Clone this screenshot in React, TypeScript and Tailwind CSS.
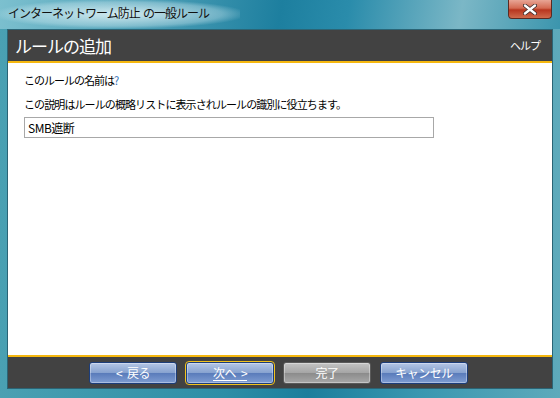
const JP = "font-['Noto_Sans_CJK_JP','Noto_Sans',sans-serif]"

function VistaButton({ children, tone = 'blue', focused = false }: { children: React.ReactNode; tone?: 'blue' | 'gray'; focused?: boolean }) {
  const face =
    tone === 'gray'
      ? 'border-[#5a5a5a] bg-[linear-gradient(#c4c4c4,#a6a6a6_48%,#8c8c8c_52%,#a8a8a8)]'
      : 'border-[#1c3d7a] bg-[linear-gradient(#b4c6e6,#88a3d0_48%,#5a7cbb_52%,#7f9dd2)]'
  return (
    <div
      className={`flex h-[22px] w-[88px] items-center justify-center rounded-[3px] border ${face} ${
        focused ? 'outline outline-1 outline-[#f2c21b]' : ''
      } shadow-[inset_0_0_0_1px_rgba(255,255,255,0.35)]`}
    >
      <span className={`${JP} flex items-center gap-[5px] text-[12px] leading-none tracking-[-0.5px] text-white`}>
        {children}
      </span>
    </div>
  )
}

export default function App() {
  return (
    <div className="flex h-[398px] w-[560px] flex-col overflow-hidden bg-[linear-gradient(90deg,#4aa0b2,#2d8ea6_40%,#1b7e9c_55%,#3a97b0_75%,#5eaabb)]">
      {/* title bar */}
      <div className="relative flex h-[29px] shrink-0 items-start bg-[linear-gradient(100deg,#7cc0cf,#5aa8bd_20%,#1d7f9f_50%,#2a8cab_62%,#7bb7c6_82%,#3b95ad)]">
        <div className="absolute left-0 top-0 h-[28px] w-[240px] bg-[radial-gradient(ellipse_at_center,rgba(230,245,248,0.85),rgba(200,230,238,0.4)_60%,transparent_75%)]" />
        <span className={`${JP} relative ml-[8px] mt-[5px] whitespace-pre text-[12px] leading-[16px] tracking-[-1px] text-[#111]`}>
          {'インターネットワーム防止  の一般ルール'}
        </span>
        <div className="absolute left-[508px] top-0 flex h-[19px] w-[44px] items-center justify-center rounded-b-[4px] border border-t-0 border-[#5b2a22] bg-[linear-gradient(#e8a595,#d46a52_45%,#b8361f_55%,#cf6a4c)]">
          <svg width="14" height="11" viewBox="0 0 14 11">
            <path d="M2 1.5 L12 9.5 M12 1.5 L2 9.5" stroke="#3a2a2a" strokeWidth="4" strokeLinecap="round" />
            <path d="M2 1.5 L12 9.5 M12 1.5 L2 9.5" stroke="#fff" strokeWidth="2.4" strokeLinecap="round" />
          </svg>
        </div>
      </div>

      {/* client area */}
      <div className="mx-[7px] mb-[9px] flex flex-1 flex-col border border-[#2b6475] bg-[#424242]">
        <div className="flex h-[33px] shrink-0 items-center justify-between border-b-2 border-[#f5b70e] pl-[7px] pr-[12px]">
          <span className={`${JP} text-[17px] leading-none tracking-[-1px] text-white`}>ルールの追加</span>
          <span className={`${JP} text-[11px] leading-none tracking-[-1px] text-white`}>ヘルプ</span>
        </div>

        <div className="flex flex-1 flex-col bg-white pl-[16px] pt-[9px]">
          <p className={`${JP} text-[11px] leading-[16px] tracking-[-1px] text-black`}>
            このルールの名前は<span className="text-[#2f6fb6]">?</span>
          </p>
          <p className={`${JP} mt-[8px] text-[11px] leading-[16px] tracking-[-0.9px] text-black`}>
            この説明はルールの概略リストに表示されルールの識別に役立ちます。
          </p>
          <div className="mt-[5px] flex h-[21px] w-[410px] items-center border border-[#a8a8a8] pl-[3px]">
            <span className={`${JP} text-[12px] leading-none tracking-[-0.5px] text-black`}>SMB遮断</span>
          </div>
        </div>

        <div className="flex h-[33px] shrink-0 gap-[9px] border-t-2 border-[#f5b70e] pl-[81px] pt-[5px]">
          <VistaButton>
            <span>&lt;</span>
            <span>戻る</span>
          </VistaButton>
          <VistaButton focused>
            <span className="mt-[2px] flex gap-[5px] border-b border-white pb-[1px]">
              <span>次へ</span>
              <span>&gt;</span>
            </span>
          </VistaButton>
          <VistaButton tone="gray">完了</VistaButton>
          <VistaButton>キャンセル</VistaButton>
        </div>
      </div>
    </div>
  )
}
